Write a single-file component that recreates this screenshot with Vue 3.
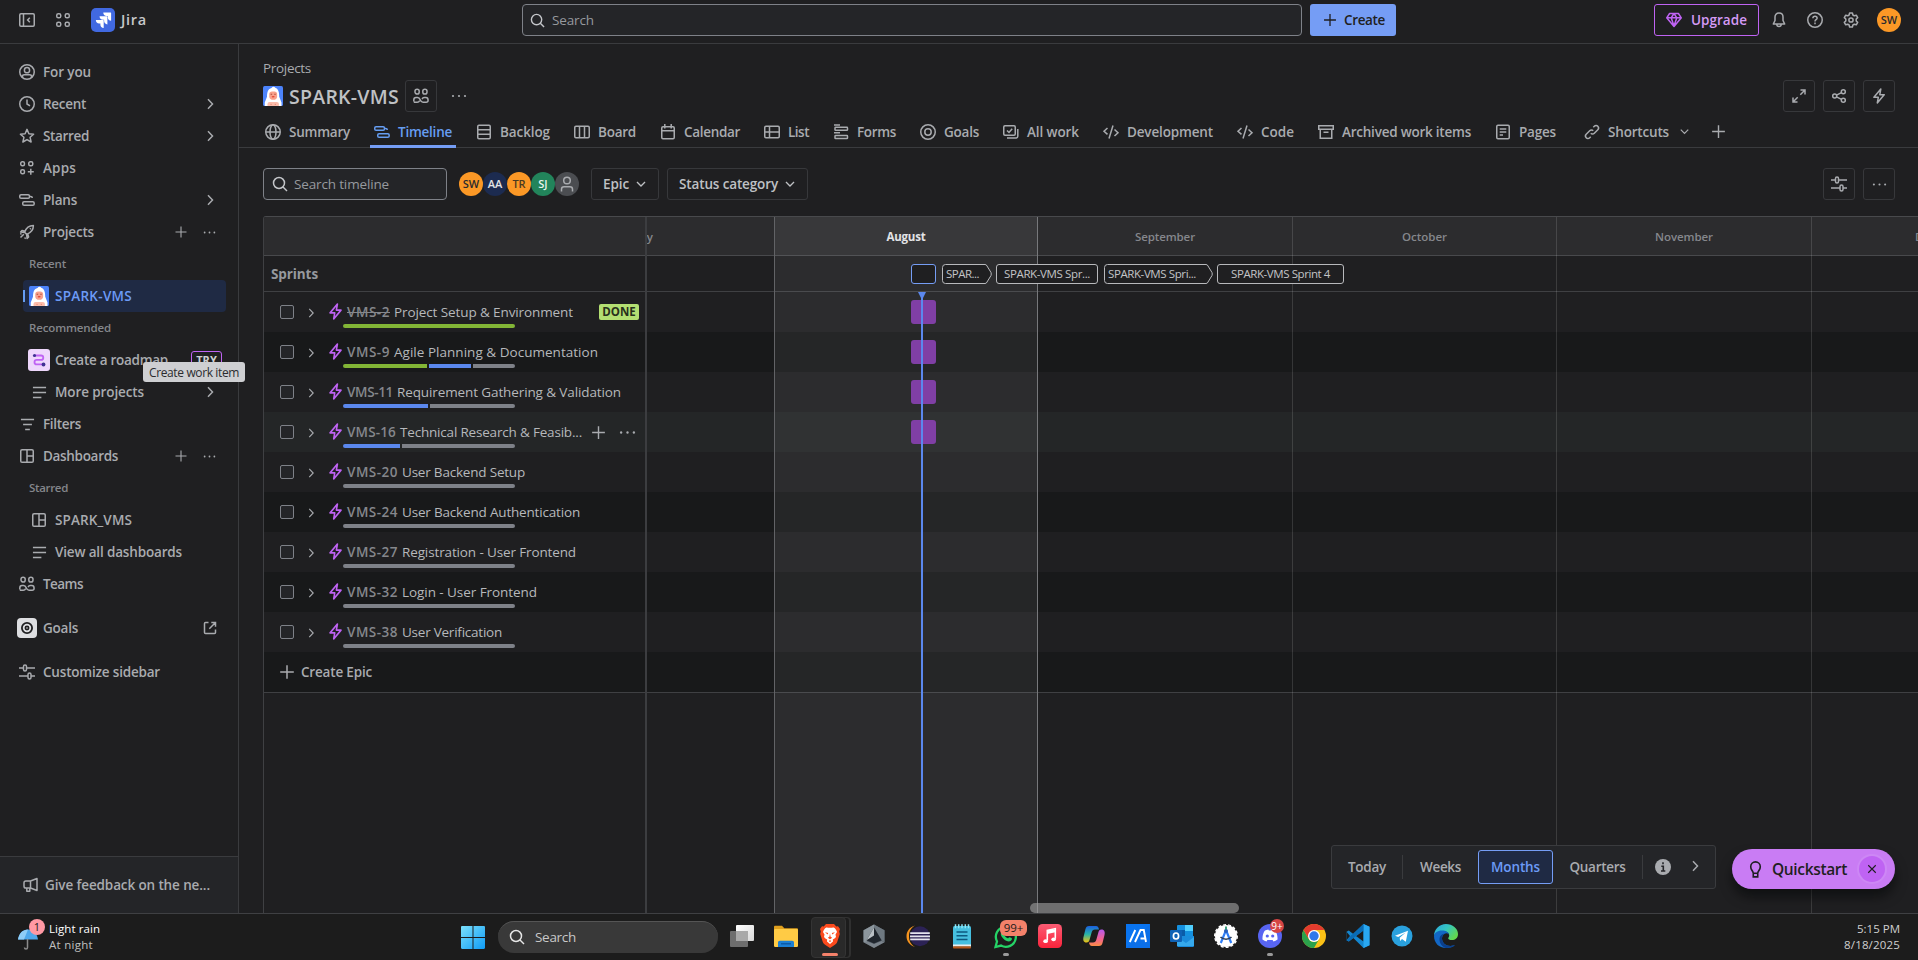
<script setup>
import { h } from 'vue'

const S = 'fill="none" stroke="currentColor" stroke-width="1.5"'
const icons = {
  panel: `<g ${S}><rect x=".75" y="1.75" width="14.5" height="12.5" rx="1.2"/><path d="M4.5 2v12M10.8 5.8 8.6 8l2.2 2.2"/></g>`,
  grid: `<g ${S}><rect x="1.75" y="1.75" width="4" height="4" rx="1.6"/><rect x="10.25" y="1.75" width="4" height="4" rx="1.6"/><rect x="1.75" y="10.25" width="4" height="4" rx="1.6"/><rect x="10.25" y="10.25" width="4" height="4" rx="1.6"/></g>`,
  apps: `<g ${S}><rect x="1.75" y="1.75" width="3.7" height="4" rx="1.5"/><rect x="9.75" y="1.75" width="4" height="4" rx="1.5"/><rect x="1.75" y="9.75" width="3.7" height="4" rx="1.5"/><path d="M11.8 8.8v6M8.8 11.8h6"/></g>`,
  user: `<g ${S}><circle cx="8" cy="8" r="7.25"/><circle cx="8" cy="6.2" r="2.6"/><path d="M3.5 13.3v-.8c0-1 .8-1.7 1.8-1.7h5.4c1 0 1.8.7 1.8 1.7v.8"/></g>`,
  clock: `<g ${S}><circle cx="8" cy="8" r="7.25"/><path d="M8 3.5V8l3 1.8"/></g>`,
  star: `<path ${S} stroke-linejoin="round" d="m8 1.4 1.9 4.3 4.7.5-3.5 3.1 1 4.7L8 11.6 3.9 14l1-4.7-3.5-3.1 4.7-.5z"/>`,
  plans: `<g ${S}><rect x=".75" y="2.75" width="9.7" height="3.6" rx="1.3"/><rect x="3.75" y="9.75" width="11.4" height="3.6" rx="1.3"/><path d="M10.5 4.5h1.2c1 0 1.600.7 1.600 1.600"/></g>`,
  rocket: `<g ${S} stroke-linejoin="round"><path d="M5.6 8.3C7 4.4 9.8 1.6 14.4 1.6c0 4.6-2.8 7.4-6.7 8.8zM6 7.2 3 6.4 1.6 7.9l4 .5M8.8 10l.8 3-1.5 1.4-.5-4M4.8 10.2l-3.3 3.3M2.4 9.4l-1 1M6.6 13.6l-1 1M11.8 4.3l-.8.8"/></g>`,
  chevR: `<path ${S} d="m6 3.3 4.5 4.7L6 12.7"/>`,
  chevD: `<path ${S} d="M3.4 5.7 8 10.3l4.6-4.6"/>`,
  plus: `<path ${S} d="M8 1.2v13.6M1.2 8h13.6"/>`,
  plusS: `<path fill="none" stroke="currentColor" stroke-width="1.1" d="M8 2.5v11M2.5 8h11"/>`,
  dots: `<g fill="currentColor"><circle cx="2" cy="8" r="1.1"/><circle cx="8" cy="8" r="1.1"/><circle cx="14" cy="8" r="1.1"/></g>`,
  lines: `<path ${S} d="M1 2.7h14M1 8h14M1 13.3h9"/>`,
  filter: `<path ${S} d="M1 2.7h14M3.3 8h9.4M5.5 13.3h5"/>`,
  dash: `<g ${S}><rect x="1.75" y="1.75" width="12.5" height="12.5" rx="1.3"/><path d="M8 2v12M8 8h6"/></g>`,
  team: `<g ${S}><rect x="2" y="1.2" width="4.2" height="4.8" rx="2.1"/><rect x="9.8" y="1.2" width="4.2" height="4.8" rx="2.1"/><path d="M.8 13.5v-1.6c0-1.4.9-2.4 2.2-2.4h1.6c1.6 0 2.2 1.2 2.6 2.3.5 1.3 1.2 2.4 2.8 2.4h3.1c1.3 0 2-.8 2-2 0-1.800-.8-2.700-2.300-2.700h-1.600c-1.100 0-1.700.6-2.100 1.600M.8 14.200h3.400c1.300 0 2-.6 2.500-1.600"/></g>`,
  ext: `<path ${S} d="M6.500 2.500h-3c-.6 0-1 .4-1 1v9c0 .6.4 1 1 1h9c.6 0 1-.4 1-1v-3M9.300 2.500h4.200v4.200M13.500 2.500 7.300 8.700"/>`,
  sliders: `<g ${S}><rect x="4.500" y="1" width="3" height="6" rx="1.500"/><rect x="9" y="9" width="3" height="6" rx="1.500"/><path d="M0 4h4.500M7.500 4H16M0 12h9M12 12h4"/></g>`,
  horn: `<g ${S} stroke-linejoin="round"><path d="M2.800 4h4.700L14 1.500v12L7.500 11H2.800C1.700 11 1 10.300 1 9.200V5.800C1 4.700 1.700 4 2.800 4zM7.500 4v7M3.800 11v3.200h3V11"/></g>`,
  search: `<g ${S}><circle cx="7" cy="7" r="5.500"/><path d="m11 11 4 4"/></g>`,
  globe: `<g ${S}><circle cx="8" cy="8" r="7.250"/><ellipse cx="8" cy="8" rx="3" ry="7.200"/><path d="M1 8h14"/></g>`,
  backlog: `<g ${S}><rect x="1.750" y="1.250" width="12.500" height="13.500" rx="1.200"/><path d="M2 5.750h12M2 10.250h12"/></g>`,
  board: `<g ${S}><rect x=".75" y="2.250" width="14.500" height="11.500" rx="1.200"/><path d="M5.500 2.500v11M10.500 2.500v11"/></g>`,
  cal: `<g ${S}><rect x="1.750" y="2.750" width="12.500" height="12" rx="1.200"/><path d="M2 6.700h12M4.800 0v4.500M11.200 0v4.500"/></g>`,
  list: `<g ${S}><rect x=".75" y="2.250" width="14.500" height="11.500" rx="1.200"/><path d="M1 8h14M5.500 2.500v11"/></g>`,
  forms: `<g ${S}><path d="M1 1h6M1 8.800h6"/><rect x="2" y="3.300" width="12.500" height="3" rx=".6"/><rect x="2" y="11.600" width="12.500" height="3" rx=".6"/></g>`,
  target: `<g ${S}><circle cx="8" cy="8" r="7.250"/><circle cx="8" cy="8" r="3.200"/></g>`,
  goal: `<circle cx="8" cy="8" r="6.800" fill="none" stroke="currentColor" stroke-width="2.400"/><circle cx="8" cy="8" r="2.200" fill="none" stroke="currentColor" stroke-width="2.200"/>`,
  work: `<g ${S}><rect x=".75" y="1.750" width="11.500" height="9.500" rx="1.200"/><path d="m4 6.500 2 2 3.200-3.800M14.800 5v7.200c0 1-.7 1.700-1.700 1.700H4"/></g>`,
  code: `<path ${S} d="M4.500 4 1 7.200l3.500 3.200M10 1.500l-4 13M11.500 5.500 15 8.700 11.500 12"/>`,
  archive: `<g ${S}><path d="M.75 1.750h14.500v3.500H.750zM2.250 5.250h11.500v9H2.250zM5.500 8.300h5"/></g>`,
  pages: `<g ${S}><rect x="1.750" y="1.250" width="12.500" height="13.500" rx="1.200"/><path d="M4.700 5h6.600M4.700 8h6.600M4.700 11h3.300"/></g>`,
  link: `<g ${S}><path d="m9.300 3.200 1-1c1-1 2.600-1 3.500 0s1 2.500 0 3.500l-3.500 3.500c-1 1-2.600 1-3.500 0M6.700 12.800l-1 1c-1 1-2.600 1-3.500 0s-1-2.500 0-3.500l3.500-3.500c1-1 2.600-1 3.500 0"/></g>`,
  bell: `<path ${S} stroke-linejoin="round" d="M8 1C5.400 1 4 2.800 4 5v3.500L2.300 12h11.400L12 8.500V5c0-2.200-1.400-4-4-4zM5.800 12.200c0 1.500.8 2.300 2.200 2.300s2.200-.8 2.200-2.300"/>`,
  help: `<g ${S}><circle cx="8" cy="8" r="7.250"/><path d="M5.900 6.300c0-1.200.9-2 2.100-2s2.100.8 2.100 1.900c0 1.500-2.100 1.500-2.100 3.200M8 10.600v1.600"/></g>`,
  gear: `<g ${S} stroke-linejoin="round"><circle cx="8" cy="8" r="2.100"/><path d="M6.600 1h2.800l.5 2 1.400.8 2-.6 1.400 2.400L13.200 7v2l1.500 1.400-1.400 2.400-2-.6-1.400.8-.5 2H6.600l-.5-2-1.400-.8-2 .6-1.400-2.400L2.800 9V7L1.300 5.600l1.400-2.400 2 .6L6.100 3z"/></g>`,
  gem: `<g fill="none" stroke="currentColor" stroke-width="1.500" stroke-linejoin="round"><path d="M3.600 1.500h8.800l2.900 4.300L8 14.500.7 5.800zM.7 5.800h14.600M5.200 5.800 8 14l2.800-8.200L8 1.500z"/></g>`,
  expand: `<path ${S} d="M9.500 2H14v4.500M14 2 9.300 6.700M2 9.500V14h4.500M2 14l4.700-4.700"/>`,
  share: `<g ${S}><circle cx="3.700" cy="8" r="2"/><circle cx="12.300" cy="3.700" r="2"/><circle cx="12.300" cy="12.300" r="2"/><path d="m5.500 7.100 5-2.500M5.500 8.900l5 2.500"/></g>`,
  bolt: `<path ${S} stroke-linejoin="round" d="M9.800 1 2.900 9.300h4.400L6.300 15l6.900-8.300H8.800z"/>`,
  person: `<g ${S}><circle cx="8" cy="4.500" r="3.300"/><path d="M2.500 15.500v-2.300c0-1.500 1-2.500 2.500-2.500h6c1.500 0 2.500 1 2.500 2.500v2.300"/></g>`,
  bulb: `<path ${S} d="M5.900 11.500C5.500 9 3.500 8.500 3.500 5.300a4.500 4.500 0 0 1 9 0c0 3.200-2 3.700-2.400 6.200zM5.900 12v2.900h4.200V12"/>`,
  x: `<path ${S} d="m3 3 10 10M13 3 3 13"/>`,
  info: `<circle cx="8" cy="8" r="8" fill="currentColor"/><path d="M8 3.300v2M6.300 7.300h2v4.300M6 12h4.300" stroke="#242528" stroke-width="1.600" fill="none"/>`,
  logo: `<path fill="#fff" d="M13.600 2.600H8.200c0 1.500 1 2.500 2.400 2.500h.9v1c0 1.400 1 2.400 2.400 2.400V3c0-.2-.1-.4-.3-.4zM10.900 5.300H5.500c0 1.500 1 2.500 2.400 2.500h.9v1c0 1.400 1 2.400 2.400 2.400V5.700c0-.2-.1-.4-.3-.4zM8.200 8H2.800c0 1.500 1 2.500 2.400 2.500h.9v.9c0 1.400 1 2.400 2.400 2.400V8.400c0-.2-.1-.4-.3-.4z"/>`,
  yeti: `<rect width="16" height="16" rx="1.300" fill="#4c83fb"/><path d="M3.200 8.500c0-4 1-6.300 3.600-7C7.600.3 9.200.2 9.800 1.300c2.300.7 3.200 3.200 3.200 7.200l1.800 4.600V16H1.400v-2.900z" fill="#fff"/><path d="M5 6.300c0-1.300.9-2 2.200-2h1.900c1.300 0 2.200.7 2.200 2v2.200c0 1.500-1.300 2.500-3.100 2.500S5 10 5 8.500z" fill="#f9a08b"/><path d="M6.100 6.600h1.200M9 6.600h1.200" stroke="#a8503f" stroke-width=".9"/><path d="M7.200 8.800c.5-.4 1.400-.4 1.900 0" stroke="#e0402e" stroke-width="1" fill="none"/><path d="M3.600 16v-1.500c0-1 .7-1.700 1.700-1.700h5.700c1 0 1.700.7 1.700 1.700V16z" fill="#fbbcab"/><path d="M6 14.700h.9M9.400 14.700h.9" stroke="#e8836d" stroke-width=".8"/>`,
  road: `<path d="M4.500 4h5.300c1.400 0 2 .8 2 1.900s-.7 2-2 2H6c-1.300 0-2 .8-2 2s.7 2 2 2h5.800" fill="none" stroke="#bf63f3" stroke-width="1.600"/><circle cx="4" cy="4" r="1.400" fill="#403294"/><circle cx="12" cy="12" r="1.700" fill="#403294"/>`,
}
const Icon = (p) =>
  h('svg', { viewBox: '0 0 16 16', width: p.s || 16, height: p.s || 16, class: 'ic', innerHTML: icons[p.n] })
Icon.props = ['n', 's']

/* Tracks a label so that it fills the width reserved for it. */
const vFit = {
  mounted(el, { value }) {
    if (!value) return
    const r = document.createRange()
    r.selectNodeContents(el)
    const n = el.textContent.length
    const gap = (value - r.getBoundingClientRect().width) / Math.max(1, n)
    el.style.letterSpacing = gap.toFixed(3) + 'px'
  },
}

const nav = [
  { i: 'user', t: 'For you', w: 48 },
  { i: 'clock', t: 'Recent', w: 43, c: 1 },
  { i: 'star', t: 'Starred', w: 46, c: 1 },
  { i: 'apps', t: 'Apps', w: 33 },
  { i: 'plans', t: 'Plans', w: 34, c: 1 },
  { i: 'rocket', t: 'Projects', w: 51, a: 1 },
  { head: 'Recent', w: 37 },
  { i: 'yeti', s: 20, t: 'SPARK-VMS', w: 77, sub: 1, on: 1 },
  { head: 'Recommended', w: 82 },
  { i: 'road', s: 22, t: 'Create a roadmap', w: 113, sub: 1, tile: 1, badge: 'TRY' },
  { i: 'lines', s: 15, t: 'More projects', w: 89, sub: 1, c: 1 },
  { i: 'filter', s: 15, t: 'Filters', w: 38 },
  { i: 'dash', t: 'Dashboards', w: 75, a: 1 },
  { head: 'Starred', w: 39 },
  { i: 'dash', t: 'SPARK_VMS', w: 77, sub: 1 },
  { i: 'lines', s: 15, t: 'View all dashboards', w: 127, sub: 1 },
  { i: 'team', t: 'Teams', w: 40 },
  { i: 'goal', s: 12, t: 'Goals', w: 35, gap: 1, white: 1, e: 1 },
  { i: 'sliders', t: 'Customize sidebar', w: 117, gap: 1 },
]
const tabs = [
  ['globe', 'Summary', 61], ['plans', 'Timeline', 54], ['backlog', 'Backlog', 50], ['board', 'Board', 38],
  ['cal', 'Calendar', 56], ['list', 'List', 21], ['forms', 'Forms', 39], ['target', 'Goals', 35],
  ['work', 'All work', 52], ['code', 'Development', 86], ['code', 'Code', 33], ['archive', 'Archived work items', 129],
  ['pages', 'Pages', 37],
]
const people = [
  ['SW', '#fb9826', '#292a2e'], ['AA', '#1c2b50', '#e2e3e6'], ['TR', '#fb9826', '#4a3a20'], ['SJ', '#22845b', '#e8f5ee'],
]
const rows = [
  { k: 'VMS-2', kw: 43, t: 'Project Setup & Environment', w: 179, p: [['g', 172]], done: 1, bar: 1 },
  { k: 'VMS-9', kw: 43, t: 'Agile Planning & Documentation', w: 204, p: [['g', 84], ['b', 42], ['n', 42]], bar: 1 },
  { k: 'VMS-11', kw: 46, t: 'Requirement Gathering & Validation', w: 224, p: [['b', 85], ['n', 85]], bar: 1 },
  { k: 'VMS-16', kw: 49, t: 'Technical Research & Feasib...', w: 182, p: [['b', 57], ['n', 113]], bar: 1, hover: 1 },
  { k: 'VMS-20', kw: 51, t: 'User Backend Setup', w: 123, p: [['n', 172]] },
  { k: 'VMS-24', kw: 51, t: 'User Backend Authentication', w: 178, p: [['n', 172]] },
  { k: 'VMS-27', kw: 51, t: 'Registration - User Frontend', w: 174, p: [['n', 172]] },
  { k: 'VMS-32', kw: 51, t: 'Login - User Frontend', w: 135, p: [['n', 172]] },
  { k: 'VMS-38', kw: 51, t: 'User Verification', w: 100, p: [['n', 172]] },
]
const months = [['July', 264, 22], ['August', 263, 39], ['September', 255, 60], ['October', 264, 45], ['November', 255, 58], ['December', 264, 57]]
const sprints = [
  { x: 264, w: 25, cur: 1 },
  { x: 295, w: 50, t: 'SPAR...', tw: 33, arrow: 1 },
  { x: 349, w: 102, t: 'SPARK-VMS Spr...', tw: 86 },
  { x: 457, w: 109, t: 'SPARK-VMS Spri...', tw: 88, arrow: 1 },
  { x: 570, w: 127, t: 'SPARK-VMS Sprint 4', tw: 99 },
]

const apps = [
  { n: 'task view', g: `<defs><linearGradient id="tv" x1="0" y1="0" x2="1" y2="1"><stop stop-color="#fff"/><stop offset="1" stop-color="#d8d8d8"/></linearGradient></defs><rect x="6" y="1" width="18" height="16" rx="1" fill="url(#tv)"/><rect x="0" y="7" width="18" height="16" rx="1" fill="#6e6e6e"/><rect x="6" y="7" width="12" height="10" fill="#a9a9a9"/>` },
  { n: 'files', g: `<path d="M0 3c0-.8.500-1.300 1.300-1.300H8l2.300 2.500H22.700c.8 0 1.300.5 1.300 1.300V9H0z" fill="#e0a01e"/><rect y="5" width="24" height="18" rx="1.300" fill="#ffcb45"/><path d="M4 23v-4.500c0-1 .8-1.800 1.800-1.800h12.400c1 0 1.800.8 1.800 1.800V23z" fill="#1b7fd3"/><path d="M7 19h10v1.500H7z" fill="#0c5aa6"/>` },
  { n: 'brave', active: 1, g: `<path d="M12 0h4l2.300 2.500 1.700-.3L22 5l-.8 2.500.6 2.500-2.600 8c-.5 1.500-1.500 2.300-3 3.300L12 24l-4.200-2.700c-1.500-1-2.500-1.800-3-3.300l-2.600-8 .6-2.500L2 5l2-2.800 1.700.3L8 0z" fill="#fb4a1d"/><path d="M12 3.800c1.500.2 2.700-.6 3.700-.2 1.700 1 2.800 2.700 3.300 4.400l-1.500 2.600.5 2.400c-.8 1.300-2 2-3.200 2.600L15 17.500l-3 2.400-3-2.400.2-1.900C8 15 6.800 14.300 6 13l.5-2.400L5 8c.5-1.700 1.600-3.400 3.300-4.400 1-.4 2.200.4 3.700.2z" fill="#fff"/><path d="m7 8.300 3.200.8-.6 1.500zM17 8.300l-3.200.8.6 1.500zM12 9.500l.6 3.300 1.600 1-2.200 1.500-2.200-1.500 1.600-1zM12 16.300l1.400.8-1.400.9-1.400-.9z" fill="#fb4a1d"/>` },
  { n: 'cube', g: `<path d="m12 .5 10.500 5.800v12L12 24 1.500 18.300v-12z" fill="#4f5861"/><path d="m12 .5 1 3-8.500 14-3 .8v-12z" fill="#8c969d"/><path d="m12 .5 10.500 5.800v12l-3-2L12 3.500z" fill="#6e7880"/><path d="m12 3.500 7.500 12.800L12 19.500l-7.500-3.200z" fill="#20262d"/><path d="M12 3.500v8L4.500 16.300z" fill="#b9c0c5"/><path d="m4.500 17 7.500 3 7.500-3 3 1.300L12 24 1.500 18.300z" fill="#9aa2a8" opacity=".6"/>` },
  { n: 'eclipse', g: `<path d="M9 1.500C3.500 3 .5 7.500.5 12.300s3 9 8.500 10.700C4.500 20.500 3 16.500 3 12.300S4.500 4 9 1.500z" fill="#f7941e"/><circle cx="14" cy="12.300" r="10" fill="#2c2255"/><path d="M4.200 9.200h19.600M4 12.300h20M4.200 15.400h19.600" stroke="#e4e2ee" stroke-width="1.700"/>` },
  { n: 'notepad', g: `<rect x="3" y="2" width="18" height="22" rx="1.500" fill="#46bfdf"/><rect x="3" y="20.500" width="18" height="2" fill="#eee"/><rect x="3" y="22.300" width="18" height="2.200" rx=".8" fill="#b5581b"/><path d="M5.500.3v4M8.700.3v4M12 .3v4M15.300.3v4M18.500.3v4" stroke="#8ce6f7" stroke-width="1.500"/><path d="M6.500 8h11M6.500 11.800h11M6.500 15.500h11" stroke="#0c5a80" stroke-width="1.600"/>` },
  { n: 'whatsapp', dot: 1, badge: '99+', g: `<path d="M1.500 23 3 17.500A10 10 0 1 1 7 21.600z" fill="#1d1d1d" stroke="#25d366" stroke-width="2.300"/><path d="M8.500 7.200c.8-.8 1.500-.5 1.800.3l.6 1.500c.2.6-.9 1.500-.7 1.900.8 1.500 2 2.600 3.600 3.300.5.200 1.300-1.200 1.900-1l1.700.8c1.400.7-.2 3.400-2.400 3.400-3.500 0-8.500-4.500-8.200-8 0-.8.700-1.400 1.700-2.200z" fill="#25d366"/>` },
  { n: 'music', g: `<defs><linearGradient id="mu" x1="0" y1="0" x2="0" y2="1"><stop stop-color="#fb5c74"/><stop offset="1" stop-color="#fa233b"/></linearGradient></defs><rect width="24" height="24" rx="4.500" fill="url(#mu)"/><path d="M9.300 16.500V6.300l8-1.600v10" fill="none" stroke="#fff" stroke-width="1.600"/><path d="M9.300 6h8v2.300l-8 1.600z" fill="#fff"/><ellipse cx="7.600" cy="17.200" rx="2.300" ry="1.900" fill="#fff"/><ellipse cx="15.600" cy="15.300" rx="2.300" ry="1.900" fill="#fff"/>` },
  { n: 'copilot', g: `<defs><linearGradient id="c1" x1="0" y1="0" x2="0" y2="1"><stop stop-color="#1b5ee0"/><stop offset=".5" stop-color="#27b5a7"/><stop offset="1" stop-color="#f3c30f"/></linearGradient><linearGradient id="c2" x1="0" y1="0" x2="0" y2="1"><stop stop-color="#b658f0"/><stop offset=".6" stop-color="#f4648c"/><stop offset="1" stop-color="#fa8d44"/></linearGradient></defs><path d="M7 2h7c2 0 2.500 1.500 3 3.500H13c-2 0-2.800 1-3.400 3L7.500 16c-.5 1.500-1 2.500-3 2.500C1.500 18.500.8 16 1.500 13l2-8C4 3 5 2 7 2z" fill="url(#c1)"/><path d="M17 22h-7c-2 0-2.500-1.500-3-3.500h4c2 0 2.800-1 3.400-3L16.500 8c.5-1.500 1-2.500 3-2.500 3 0 3.700 2.500 3 5.500l-2 8c-.5 2-1.500 3-3.500 3z" fill="url(#c2)"/>` },
  { n: 'maui', g: `<rect width="24" height="24" fill="#0b6fe8"/><path d="m0 0h24L0 24z" fill="#0878f5" opacity=".6"/><path d="m3.800 18 5.500-12M9 18l5.500-12h3.300L20 18M14.500 14.500h5" stroke="#fff" stroke-width="1.900" fill="none"/>` },
  { n: 'outlook', g: `<rect x="7" y="1" width="16" height="20" rx="1" fill="#1490df"/><path d="M7 6h8v6H7z" fill="#0a5ca8"/><path d="M15 1h8v6h-8z" fill="#50d0ff"/><path d="M7 12h17v9.500c0 1-.6 1.500-1.500 1.500H8.500c-1 0-1.500-.6-1.500-1.500z" fill="#1a8bdb"/><path d="m7 13 9 6 8-6v9H7z" fill="#36a9ec"/><rect y="6" width="12" height="12" rx="1" fill="#0f62b5"/><ellipse cx="6" cy="12" rx="2.600" ry="3" fill="none" stroke="#fff" stroke-width="1.700"/>` },
  { n: 'android', g: `<circle cx="12" cy="12" r="11" fill="#fff"/><circle cx="12" cy="12" r="11.300" fill="none" stroke="#fff" stroke-width="1.400" stroke-dasharray="3 2"/><path d="m6.800 19 4.600-11.500h1.200L17.200 19" fill="none" stroke="#2f7df6" stroke-width="2.200"/><circle cx="12" cy="7" r="2" fill="#2a5db8"/><path d="M6.500 13c3.200 3 7.800 3 11 0" fill="none" stroke="#30405c" stroke-width="1.700"/><path d="M12 2.500v3" stroke="#0f8a5f" stroke-width="1.600"/>` },
  { n: 'discord', dot: 1, badge: '9+', g: `<circle cx="12" cy="12" r="12" fill="#5865f2"/><path d="M6.500 7c1.500-1 2.700-1.300 3.800-1.500l.6 1c.8-.1 1.500-.1 2.200 0l.6-1c1.100.2 2.300.5 3.800 1.500 1.500 2.500 2.200 5.300 2 8.500-1.300 1.100-2.600 1.700-4 2l-.9-1.600H9.400l-.9 1.600c-1.400-.3-2.700-.9-4-2-.2-3.200.5-6 2-8.500z" fill="#fff"/><circle cx="9.300" cy="12" r="1.600" fill="#5865f2"/><circle cx="14.700" cy="12" r="1.600" fill="#5865f2"/>` },
  { n: 'chrome', g: `<circle cx="12" cy="12" r="12" fill="#fbc116"/><path d="M1.600 6a12 12 0 0 0 10.400 18l5.200-9a6 6 0 0 1-10.400 0z" fill="#2ba24c"/><path d="M1.600 6 6.800 15 12 6h10.400A12 12 0 0 0 1.600 6z" fill="#e33b2e"/><circle cx="12" cy="12" r="6" fill="#fff"/><circle cx="12" cy="12" r="4.700" fill="#2f78ea"/>` },
  { n: 'editor', g: `<path d="m17.500 0 6 2.700v18.600l-6 2.700L7.300 14l-4.500 3.500L.5 16.200V7.800l2.300-1.300L7.300 10z" fill="#1486cf"/><path d="M17.500 6.500 10 12l7.500 5.500z" fill="#1c1c1c"/><path d="M.500 7.800 4 12 .500 16.200z" fill="#1c1c1c"/><path d="m17.500 0 6 2.700v18.600l-6 2.700z" fill="#29a8f2"/><path d="m.500 16.200 4-4.200L17.500 0v6.500L2.800 17.500z" fill="#0a6cb5"/>` },
  { n: 'telegram', g: `<circle cx="12" cy="12" r="10.500" fill="#2aa1de"/><path d="m5 11.800 13-5-2.200 11-3.800-2.700-1.900 1.900-.4-3.200 6-5.200-7.500 4.500z" fill="#fff"/>` },
  { n: 'edge', g: `<defs><linearGradient id="e1" x1="0" y1="0" x2="1" y2=".6"><stop stop-color="#2aa5e0"/><stop offset=".5" stop-color="#35c6c2"/><stop offset="1" stop-color="#62d84e"/></linearGradient></defs><path d="M0 12C0 5 5.500 0 12 0s12 4.500 12 10c0 4-2.800 6-6 6-2.500 0-3.800-.9-3.800-1.800 0-.7 1-1 1-2.700C15.200 9 13 7.200 9.500 7.200 4.500 7.200 0 10 0 12z" fill="url(#e1)"/><path d="M0 12c0-3 3.500-5.500 8-5.500 4 0 7.200 2 7.200 5 0-1.500-2-2.500-3.700-2-2.500.7-3.500 3-3.500 5 0 4.500 4 7.500 8.500 7.500 2 0 3.500-.5 4.700-1.200C19.300 23 15.900 24 12 24 5 24 0 19 0 12z" fill="#1267c5"/><path d="M8 14.500c0 4.500 4 7.500 8.500 7.500 2 0 3.500-.5 4.700-1.200C19.300 23 15.900 24 12 24c-4-1-6.500-5-6.500-8.500C5.500 12 8 9.700 11.500 9.500 9 10.200 8 12.500 8 14.500z" fill="#0b3f8c"/>` },
]
</script>

<template>
  <div class="screen">
    <header class="top">
      <Icon n="panel" class="t-panel" />
      <Icon n="grid" class="t-grid" />
      <span class="logo"><Icon n="logo" s="22" /></span>
      <b v-fit="26" class="brand">Jira</b>
      <div class="search main-search"><Icon n="search" s="15" /><span v-fit="42">Search</span></div>
      <button class="create"><Icon n="plus" s="14" /><span v-fit="41">Create</span></button>
      <div class="top-right">
        <button class="upgrade"><Icon n="gem" /><span v-fit="56">Upgrade</span></button>
        <Icon n="bell" /><Icon n="help" /><Icon n="gear" />
        <span class="me">SW</span>
      </div>
    </header>

    <div class="body">
      <aside class="side">
        <nav>
          <template v-for="(it, k) in nav" :key="k">
            <div v-if="it.head" class="head"><span v-fit="it.w">{{ it.head }}</span></div>
            <div v-else class="item" :class="{ sub: it.sub, on: it.on, gap: it.gap }">
              <span class="slot" :class="{ tile: it.tile, white: it.white }"><Icon :n="it.i" :s="it.s" /></span>
              <span v-fit="it.w" class="lab">{{ it.t }}</span>
              <span v-if="it.badge" class="try">{{ it.badge }}</span>
              <span v-if="it.a" class="acts"><Icon n="plusS" /><Icon n="dots" s="13" /></span>
              <Icon v-if="it.c" n="chevR" class="end" />
              <Icon v-if="it.e" n="ext" class="end" />
            </div>
          </template>
        </nav>
        <div class="feedback"><Icon n="horn" /><span v-fit="165">Give feedback on the ne...</span></div>
        <div class="tooltip"><span v-fit="90">Create work item</span></div>
      </aside>

      <main class="main">
        <div class="crumb"><span v-fit="48">Projects</span></div>
        <div class="title-row">
          <Icon n="yeti" s="20" />
          <h1 v-fit="110">SPARK-VMS</h1>
          <button class="sq"><Icon n="team" /></button>
          <Icon n="dots" class="title-dots" />
          <div class="right">
            <button class="sq"><Icon n="expand" /></button>
            <button class="sq"><Icon n="share" /></button>
            <button class="sq"><Icon n="bolt" /></button>
          </div>
        </div>
        <div class="tabs">
          <div v-for="(t, k) in tabs" :key="t[1]" class="tab" :class="{ cur: k === 1 }">
            <Icon :n="t[0]" /><span class="tl" :style="{ width: t[2] + 'px' }"><span v-fit="t[2]">{{ t[1] }}</span></span>
          </div>
          <div class="tab short"><Icon n="link" /><span v-fit="61">Shortcuts</span><Icon n="chevD" s="13" class="sc" /></div>
          <Icon n="plus" s="15" />
        </div>

        <div class="tools">
          <div class="search tl-search"><Icon n="search" /><span v-fit="95">Search timeline</span></div>
          <div class="people">
            <span v-for="p in people" :key="p[0]" class="av" :style="{ background: p[1], color: p[2] }">{{ p[0] }}</span>
            <span class="av none"><Icon n="person" /></span>
          </div>
          <button class="drop epic"><span v-fit="26">Epic</span><Icon n="chevD" s="14" /></button>
          <button class="drop"><span v-fit="99">Status category</span><Icon n="chevD" s="14" /></button>
          <div class="right">
            <button class="sq"><Icon n="sliders" /></button>
            <button class="sq"><Icon n="dots" s="15" /></button>
          </div>
        </div>

        <section class="table">
          <div class="hrow"></div>
          <div class="srow"><b v-fit="47">Sprints</b></div>
          <div v-for="(r, k) in rows" :key="r.k" class="row" :class="{ alt: k % 2, hover: r.hover }">
            <span class="box"></span>
            <Icon n="chevR" s="14" class="chev" />
            <Icon n="bolt" s="17" class="epic-ic" />
            <div class="cell">
              <div class="txt">
                <span v-fit="r.kw" class="key" :class="{ strike: r.done }">{{ r.k }}</span>
                <span v-fit="r.w" class="name">{{ r.t }}</span>
                <span v-if="r.done" class="done">DONE</span>
                <span v-if="r.hover" class="row-acts"><Icon n="plus" s="15" /><Icon n="dots" s="17" /></span>
              </div>
              <div class="prog"><i v-for="(p, j) in r.p" :key="j" :class="p[0]" :style="{ width: p[1] + 'px' }"></i></div>
            </div>
          </div>
          <div class="row alt new"><Icon n="plus" /><span v-fit="71">Create Epic</span></div>

          <div class="canvas">
            <div class="months">
              <div v-for="m in months" :key="m[0]" class="month" :class="{ now: m[0] === 'August' }" :style="{ width: m[1] + 'px' }">
                <div class="mh"><span v-fit="m[2]">{{ m[0] }}</span></div>
              </div>
            </div>
            <div v-for="s in sprints" :key="s.x" class="sprint" :class="{ active: s.cur, arrow: s.arrow }" :style="{ left: s.x + 'px', width: s.w + 'px' }">
              <svg v-if="s.arrow" :width="s.w" height="20" class="outline">
                <path :d="`M3.500.5H${s.w - 7}Q${s.w - 5.500}.5 ${s.w - 5} 2L${s.w - 1} 8.500Q${s.w - .5} 10 ${s.w - 1} 11.500L${s.w - 5} 18Q${s.w - 5.500} 19.500 ${s.w - 7} 19.500H3.500Q.5 19.500 .5 16.500V3.500Q.5.5 3.500.5z`" fill="#1f1f21" stroke="#b8b9bc" />
              </svg>
              <span v-fit="s.tw" class="st">{{ s.t }}</span>
            </div>
            <template v-for="(r, k) in rows" :key="r.k">
              <div v-if="r.bar" class="bar" :style="{ top: 83 + k * 40 + 'px' }"></div>
            </template>
            <div class="today"></div>
            <div class="scroll"></div>
          </div>
        </section>

        <div class="zoom">
          <span class="z zt"><span v-fit="38">Today</span></span>
          <i></i>
          <span class="z zw"><span v-fit="41">Weeks</span></span>
          <span class="z zm"><span v-fit="49">Months</span></span>
          <span class="z zq"><span v-fit="56">Quarters</span></span>
          <i></i>
          <Icon n="info" class="zi" />
          <Icon n="chevR" class="zc" />
        </div>
        <div class="quick"><Icon n="bulb" s="17" /><span v-fit="75" class="qs">Quickstart</span><span class="qx"><Icon n="x" s="12" /></span></div>
      </main>
    </div>

    <footer class="taskbar">
      <div class="weather">
        <svg width="24" height="30" viewBox="0 0 24 30">
          <path d="M2 16.500C3 10 7 6.500 12 6.500S21 10 22 16.500z" fill="#4fa8ec" />
          <path d="M2 16.500C3 10 7 6.500 12 6.500L8 16.500z" fill="#8fcdf7" />
          <path d="M11.500 16v8.500c0 2-3 2-3 0" fill="none" stroke="#8b8b8b" stroke-width="1.500" />
        </svg>
        <span class="wb">1</span>
        <div class="wt"><span v-fit="51" class="w1">Light rain</span><span v-fit="44">At night</span></div>
      </div>
      <svg class="win" width="24" height="23" viewBox="0 0 24 24" preserveAspectRatio="none">
        <defs><linearGradient id="wn" x1="0" y1="0" x2="1" y2="1"><stop stop-color="#7be0fb" /><stop offset="1" stop-color="#0f9bf5" /></linearGradient></defs>
        <path d="M0 1.200C0 .5.500 0 1.200 0H11.500v11.500H0zM12.500 0h10.300c.7 0 1.200.5 1.200 1.200v10.300H12.500zM0 12.500h11.500V24H1.200C.5 24 0 23.500 0 22.800zM12.500 12.500H24v10.300c0 .7-.5 1.200-1.200 1.200H12.500z" fill="url(#wn)" />
      </svg>
      <div class="win-search"><Icon n="search" /><span v-fit="41">Search</span></div>
      <div class="apps">
        <div v-for="a in apps" :key="a.n" class="app" :class="{ act: a.active }">
          <svg width="24" height="25" viewBox="0 0 24 25" v-html="a.g"></svg>
          <span v-if="a.badge" class="ab" :class="{ small: a.badge === '9+' }">{{ a.badge }}</span>
          <span v-if="a.dot" class="dot"></span>
        </div>
      </div>
      <div class="time"><span v-fit="43">5:15 PM</span><span v-fit="56">8/18/2025</span></div>
    </footer>
  </div>
</template>

<style>
body { background: #1f1f21; overflow: hidden; }
</style>

<style scoped>
* { box-sizing: border-box; }
.screen { width: 1918px; height: 960px; display: flex; flex-direction: column; background: #1f1f21; color: #a9abaf; font: 13.5px/20px "Open Sans", "Noto Sans", sans-serif; white-space: nowrap; overflow: hidden; }
.screen span, .screen h1, .screen b { flex-shrink: 0; }
.ic { flex: none; display: block; overflow: visible; }
button { font: inherit; color: inherit; background: none; border: 1px solid #37383b; border-radius: 3px; padding: 0; height: 32px; display: flex; align-items: center; flex: none; }

.top { height: 44px; flex: none; border-bottom: 1px solid #3a3b3e; display: flex; align-items: center; padding: 0 17px 3px 19px; }
.t-grid { margin-left: 20px; }
.logo { width: 24px; height: 24px; border-radius: 5px; background: #4169e1; margin-left: 20px; display: flex; align-items: center; justify-content: center; }
.brand { margin-left: 6px; width: 26px; font-size: 14.500px; font-weight: 600; color: #c7c8cb; }
.search { display: flex; align-items: center; border: 1px solid #7e8188; border-radius: 4px; background: #242528; height: 32px; color: #96999e; }
.search .ic { color: #c4c6ca; }
.main-search { width: 780px; margin-left: 375px; padding-left: 7px; gap: 7px; }
.create { margin-left: 8px; width: 86px; border: 0; background: #759df5; color: #1f1f21; padding-left: 13px; gap: 7px; font-weight: 600; }
.top-right { margin-left: auto; display: flex; align-items: center; gap: 20px; }
.upgrade { width: 105px; border-color: #bf63f3; margin-right: -8px; padding-left: 11px; gap: 9px; font-weight: 600; color: #d59af6; }
.upgrade .ic { color: #bf63f3; }
.me { width: 24px; height: 24px; border-radius: 50%; background: #fb9826; color: #292a2e; font: 600 11px/24px "Open Sans", sans-serif; text-align: center; margin-left: -2px; }

.body { flex: 1; display: flex; min-height: 0; border-bottom: 1px solid #3f4043; }
.side { width: 239px; border-right: 1px solid #3a3b3e; display: flex; flex-direction: column; position: relative; flex: none; }
nav { padding-top: 12px; flex: 1; }
.item { height: 32px; margin: 0 12px 0 11px; padding: 0 8px 0 4px; display: flex; align-items: center; font-weight: 600; position: relative; }
.item.gap { margin-top: 12px; }
.slot { width: 24px; height: 24px; display: flex; align-items: center; justify-content: center; }
.lab { margin-left: 4px; }
.item.sub { margin-left: 23px; }
.head { height: 32px; padding: 6px 0 0 29px; font-size: 11.500px; font-weight: 600; color: #84868b; }
.item.on { background: #1f2a44; color: #6c9bf7; border-radius: 4px; }
.item.on::before { content: ""; position: absolute; left: 0; top: 10px; width: 2px; height: 12px; background: #669df1; }
.slot.white { background: #dddee1; color: #1f1f21; width: 20px; height: 20px; border-radius: 4px; margin: 0 2px; }
.slot.tile .ic { background: #eed7fc; border-radius: 3px; padding: 2px; }
.acts { margin-left: auto; display: flex; align-items: center; gap: 14px; margin-right: 2px; }
.end { margin-left: auto; }
.try { margin-left: auto; width: 31px; height: 18px; border: 1px solid #bf63f3; border-radius: 3px; font: 700 11px/16px "Open Sans", sans-serif; text-align: center; margin-right: -4px; color: #cecfd2; }
.feedback { height: 57px; background: #242528; border-top: 1px solid #3a3b3e; display: flex; align-items: center; padding-left: 23px; gap: 6px; font-weight: 600; }
.tooltip { position: absolute; left: 143px; top: 318px; width: 102px; height: 20px; border-radius: 3px; background: #cecfd2; color: #2b2c2f; font-size: 12px; line-height: 21px; padding-left: 6px; z-index: 5; }

.main { flex: 1; min-width: 0; display: flex; flex-direction: column; position: relative; }
.crumb { padding: 14px 0 0 24px; height: 36px; }
.title-row { display: flex; align-items: center; height: 32px; padding: 0 23px 0 24px; }
h1 { margin: 2px 0 0 6px; width: 110px; font-size: 19.500px; font-weight: 600; line-height: 24px; color: #bfc1c4; }
.sq { width: 32px; justify-content: center; }
.title-row > .sq { margin-left: 6px; }
.title-dots { margin-left: 14px; }
.right { margin-left: auto; display: flex; gap: 8px; }
.tabs { height: 36px; border-bottom: 1px solid #3a3b3e; display: flex; align-items: center; gap: 24px; padding-left: 26px; padding-top: 4px; margin-bottom: 20px; font-weight: 600; }
.tab { display: flex; gap: 8px; align-items: center; height: 32px; position: relative; }
.tab.cur { color: #669df1; }
.tab.cur::after { content: ""; position: absolute; left: -4px; right: -4px; bottom: 0; height: 3px; background: #759df5; }
.short { margin-left: 4px; margin-right: -4px; }
.sc { margin-left: 1px; }

.tools { display: flex; align-items: center; height: 32px; padding: 0 23px 0 24px; margin-bottom: 16px; }
.tl-search { width: 184px; padding-left: 8px; gap: 6px; }
.people { display: flex; margin-left: 12px; width: 120px; margin-right: 12px; }
.av { width: 24px; height: 24px; border-radius: 50%; font: 600 11px/24px "Open Sans", sans-serif; text-align: center; }
.av.none { background: #4b4d51; display: flex; align-items: center; justify-content: center; }
.drop { padding-left: 11px; font-weight: 600; gap: 5px; width: 141px; color: #bfc1c4; }
.epic { width: 68px; margin-right: 8px; }

.table { position: relative; margin-left: 24px; flex: 1; border-left: 1px solid #3f4043; border-top: 1px solid #48494c; border-top-left-radius: 3px; overflow: hidden; }
.hrow { height: 39px; background: #2c2c2e; border-bottom: 1px solid #48494c; }
.srow { height: 36px; border-bottom: 1px solid #3f4043; padding: 8px 0 0 7px; color: #96999e; }
.srow b { font-weight: 700; }
.row { height: 40px; display: flex; padding-left: 16px; background: #1f1f21; }
.row.alt { background: #18191a; }
.row.hover { background: #242627; }
.box { width: 14px; height: 14px; margin-top: 13px; border: 1px solid #7e8188; border-radius: 2px; background: #242528; }
.chev { margin: 14px 0 0 10px; }
.chev :deep(path) { stroke-width: 1.300; }
.epic-ic { margin: 11px 0 0 9px; color: #bf63f3; }
.epic-ic + .cell { margin-left: -1px; }
.cell { width: 302px; }
.txt { display: flex; align-items: center; height: 20px; margin-top: 10px; padding-left: 4px; }
.key { font-weight: 600; color: #85878c; }
.strike { text-decoration: line-through; }
.name { margin-left: 4px; color: #b6b8bb; }
.done { margin-left: auto; margin-right: 6px; width: 40px; height: 16px; background: #b3df72; border-radius: 2px; color: #28311b; font: 700 11.500px/16px "Open Sans", sans-serif; text-align: center; }
.row-acts { margin-left: auto; display: flex; align-items: center; gap: 13px; margin-right: 9px; }
.prog { display: flex; gap: 2px; margin-top: 2px; border-radius: 2px; overflow: hidden; width: 172px; }
.prog i { height: 4px; }
.g { background: #82b536; }
.b { background: #5b88ee; }
.n { background: #7e8188; }
.new { align-items: center; gap: 6px; font-weight: 600; height: 41px; border-bottom: 1px solid #3f4043; padding-left: 15px; }

.canvas { position: absolute; left: 381px; top: 0; right: 0; bottom: 0; border-left: 2px solid #3c3d40; overflow: hidden; }
.months { position: absolute; top: 0; bottom: 0; left: -137px; display: flex; }
.month { border-left: 1px solid rgba(255, 255, 255, .13); }
.mh { height: 38px; display: flex; align-items: center; justify-content: center; font-size: 11.500px; line-height: 16px; font-weight: 600; color: #85878c; padding-top: 2px; }
.now { background: rgba(255, 255, 255, .06); border-left-color: #626366; }
.now .mh { font-weight: 700; color: #e2e3e6; }
.now + .month { border-left-color: #77787b; }
.sprint { position: absolute; top: 47px; height: 20px; border: 1px solid #b8b9bc; border-radius: 3px; background: #1f1f21; display: flex; align-items: center; justify-content: center; font-size: 11.500px; color: #c3c4c7; }
.sprint.active { border-color: #759df5; }
.sprint.arrow { border: 0; background: none; justify-content: flex-start; padding-left: 4px; }
.outline { position: absolute; left: 0; top: 0; }
.st { position: relative; }
.bar { position: absolute; left: 264px; width: 25px; height: 24px; border-radius: 3px; background: #803fa5; }
.today { position: absolute; left: 274px; top: 75px; bottom: 0; width: 2px; background: #5b88ee; }
.today::before { content: ""; position: absolute; left: -3px; top: 0; border: 4px solid transparent; border-top: 8px solid #5b88ee; border-bottom: 0; }
.scroll { position: absolute; left: 383px; bottom: 0; width: 209px; height: 10px; border-radius: 5px; background: rgba(160, 160, 160, .62); }

.zoom { position: absolute; left: 1092px; top: 801px; width: 385px; height: 44px; border: 1px solid #3a3b3e; border-radius: 3px; background: #242528; display: flex; align-items: center; font-weight: 600; }
.zoom i { width: 1px; height: 24px; background: #3a3b3e; }
.z { height: 34px; display: flex; align-items: center; justify-content: center; }
.zt { width: 70px; }
.zw { width: 75px; }
.zm { width: 75px; background: #1f2a44; border: 1px solid #759df5; border-radius: 3px; color: #6c9bf7; }
.zq { width: 89px; }
.zi { margin-left: 12px; }
.zc { margin-left: 16px; margin-top: -3px; }
.quick { position: absolute; left: 1493px; top: 805px; width: 163px; height: 40px; border-radius: 20px; background: #c97cf4; color: #1f1f21; display: flex; align-items: center; padding-left: 15px; box-shadow: 0 8px 12px rgba(1, 4, 4, .5); }
.qs { font-size: 15.500px; font-weight: 600; margin-left: 8px; width: 75px; }
.qx { width: 26px; height: 26px; border-radius: 50%; background: #bf63f3; box-shadow: 0 0 0 2px #cd87f5; margin-left: 12px; display: flex; align-items: center; justify-content: center; }

.taskbar { height: 46px; flex: none; background: #1c1c1c; display: flex; align-items: flex-start; }
.weather { width: 462px; display: flex; padding-left: 16px; position: relative; }
.weather svg { margin-top: 9px; }
.wb { position: absolute; left: 29px; top: 5px; width: 16px; height: 16px; border-radius: 50%; background: #ff99a4; color: #1c1c1c; font-size: 11px; line-height: 16px; text-align: center; }
.wt { display: flex; flex-direction: column; margin: 7px 0 0 9px; font-size: 11.500px; line-height: 16px; color: #c0c0c0; }
.w1 { color: #fff; }
.win { margin: 12px 1px 0 -1px; }
.win-search { margin: 7px 0 0 12px; width: 220px; height: 32px; border-radius: 16px; background: #393939; border-top: 1px solid #555; display: flex; align-items: center; padding: 0 0 2px 11px; gap: 10px; color: #c8c8c8; }
.win-search .ic { color: #e6e6e6; }
.apps { display: flex; margin-left: 2px; }
.app { width: 44px; height: 46px; display: flex; justify-content: center; padding-top: 10px; position: relative; }
.app svg { position: relative; }
.act::before { content: ""; position: absolute; left: 3px; top: 3px; width: 33px; height: 39px; border-radius: 4px; background: #292929; border: 1px solid #343434; box-shadow: 4px 0 0 -1px #1c1c1c, 5px 0 0 0 #303030; }
.act::after { content: ""; position: absolute; left: 14px; top: 39px; width: 16px; height: 3px; border-radius: 2px; background: #f4816a; }
.ab { position: absolute; left: 16px; top: 6px; width: 27px; height: 16px; border-radius: 6px; background: #f4816a; color: #1c1c1c; font-size: 11.500px; line-height: 16px; text-align: center; }
.ab.small { left: 22px; top: 5px; width: 14px; height: 14px; border-radius: 50%; background: #d64545; color: #fff; font-size: 10px; line-height: 14px; }
.dot { position: absolute; left: 19px; top: 39px; width: 6px; height: 3px; border-radius: 2px; background: #9a9a9a; }
.time { margin: 7px 18px 0 auto; display: flex; flex-direction: column; align-items: flex-end; font-size: 11.500px; line-height: 16px; color: #d0d0d0; }
</style>
